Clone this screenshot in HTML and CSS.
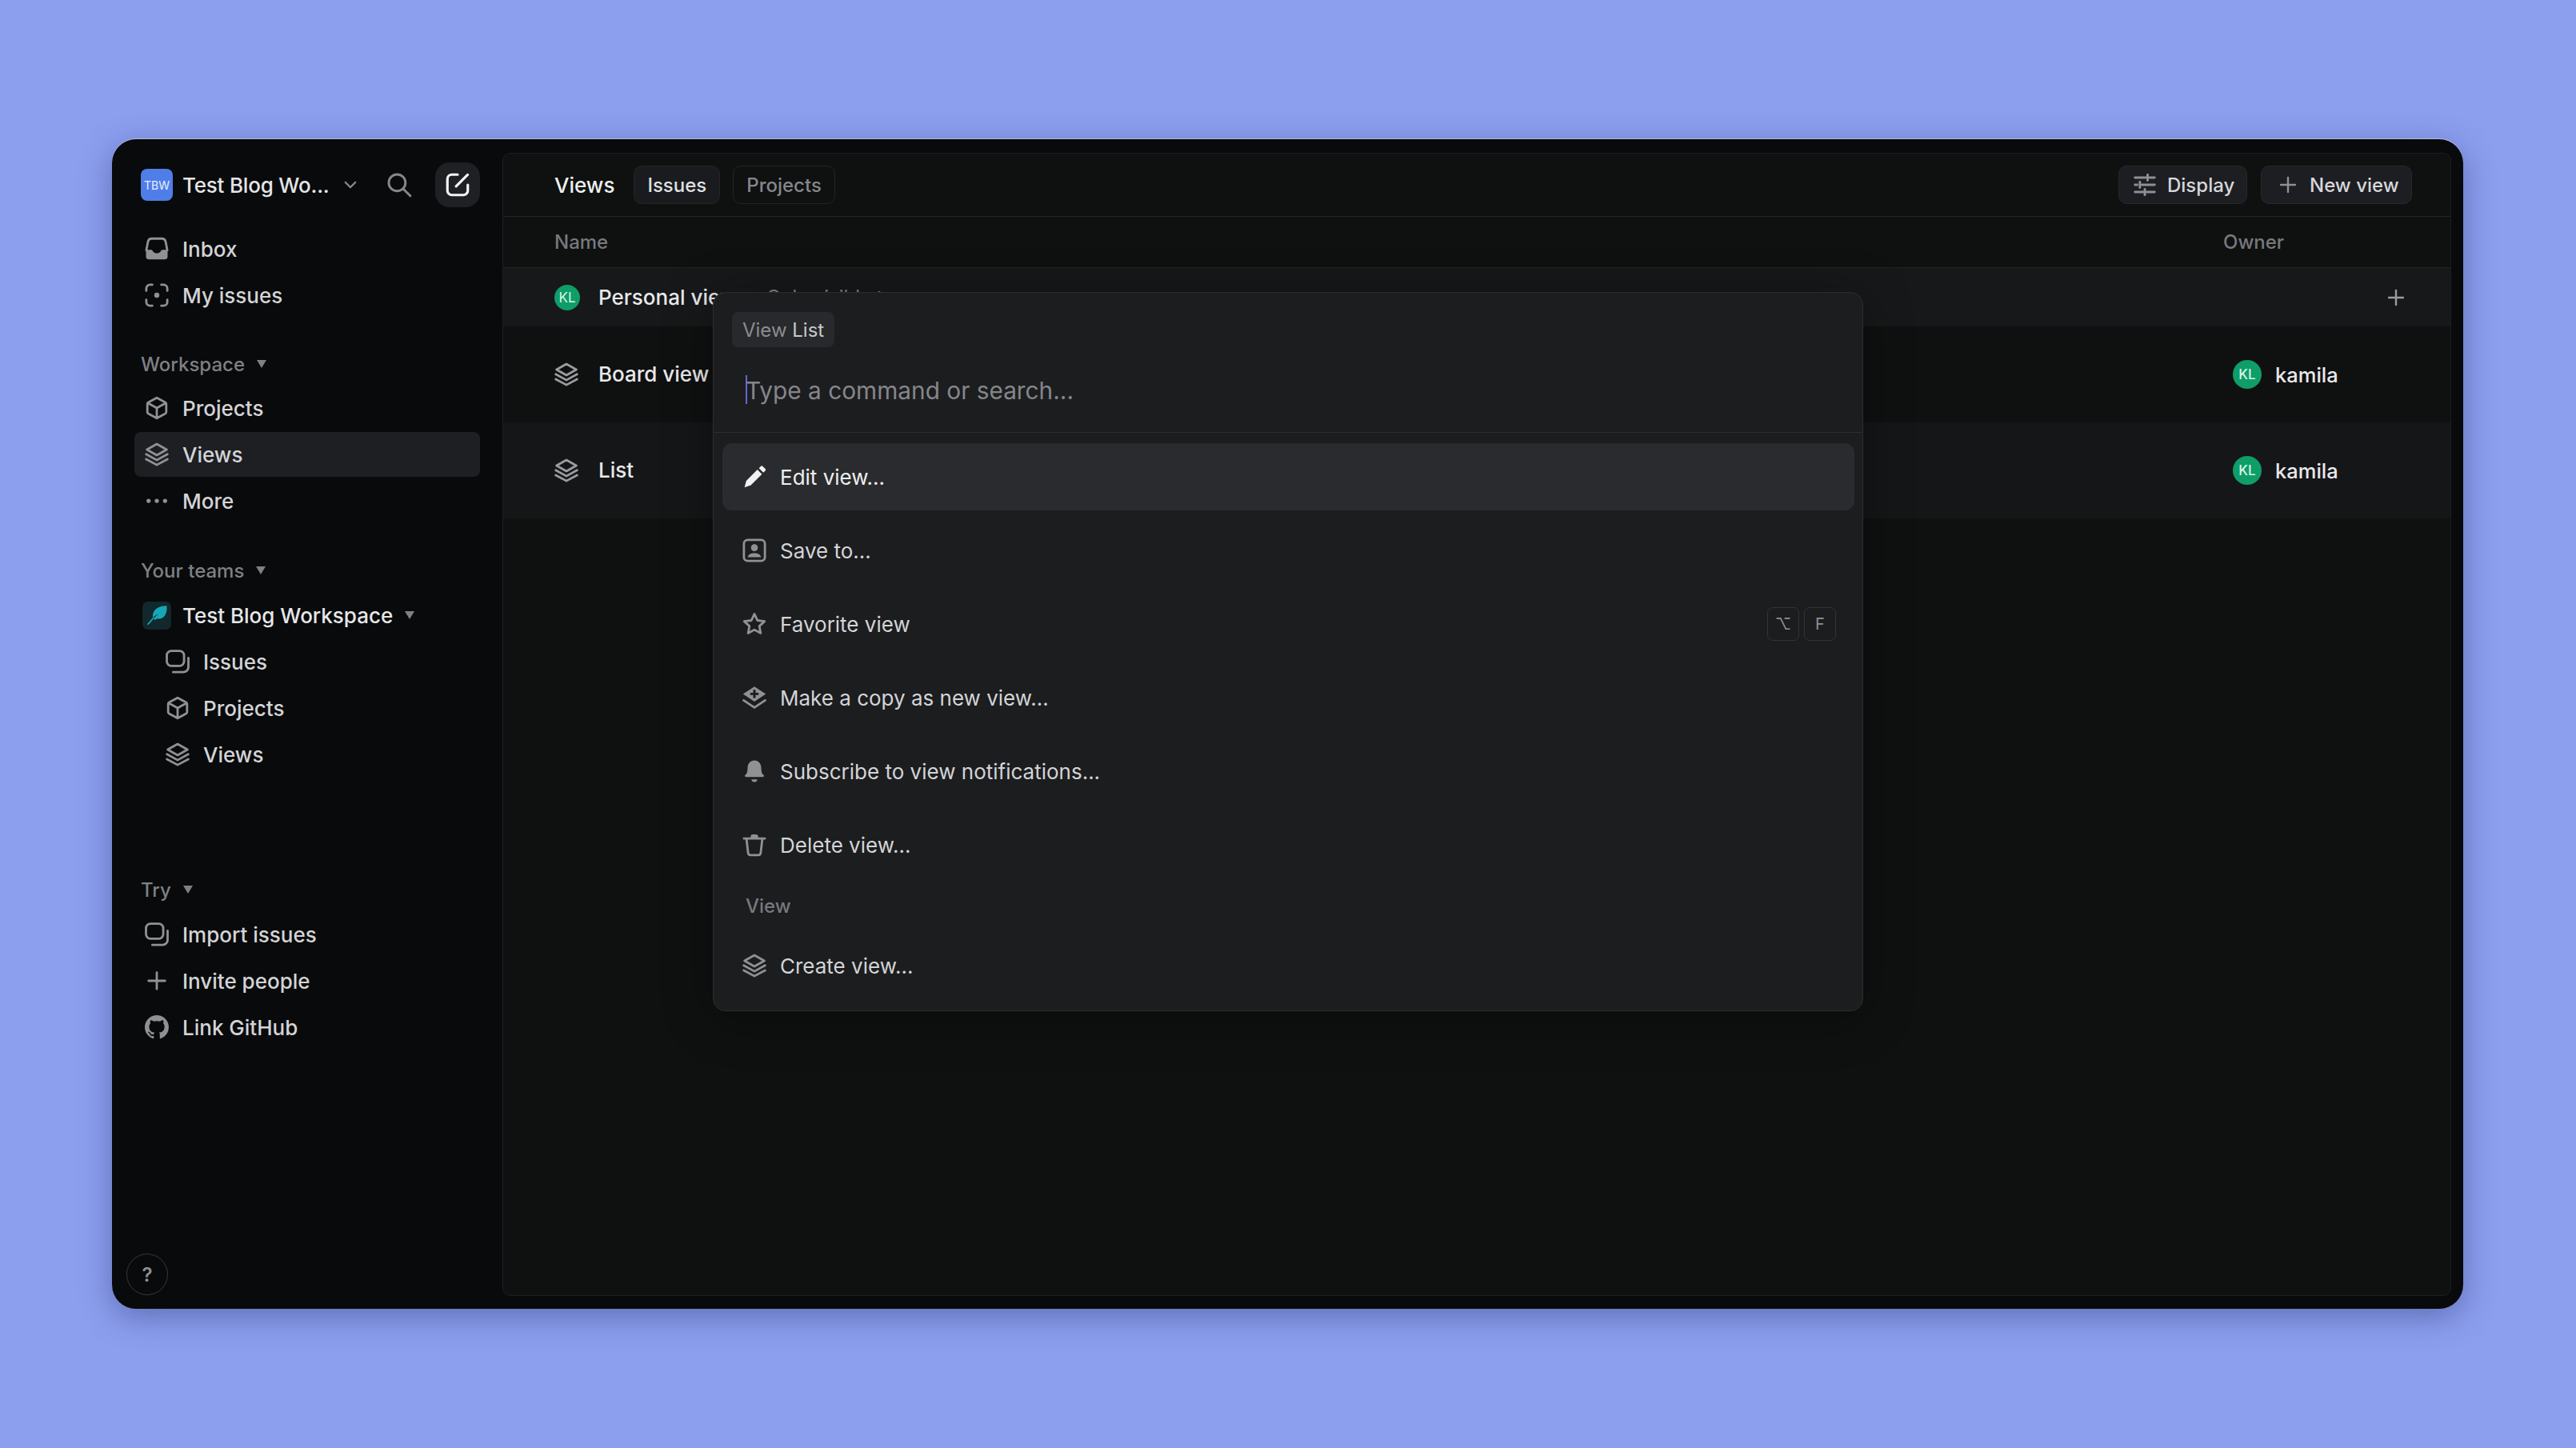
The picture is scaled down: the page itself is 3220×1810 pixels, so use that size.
FILE: index.html
```html
<!DOCTYPE html>
<html lang="en">
<head>
<meta charset="utf-8">
<title>Views</title>
<link rel="stylesheet" href="styles.css">
</head>
<body>
<svg class="defs" width="0" height="0" aria-hidden="true">
  <symbol id="i-inbox" viewBox="0 0 16 16"><path class="s" d="M1 9 2.100 3.300C2.400 2 3.300 1.200 4.600 1.200h6.800c1.300 0 2.200.8 2.500 2.100L15 9"/><path class="f" d="M.8 8.600H4c.6 0 1 .3 1.300.8.5 1 1.400 1.500 2.700 1.500s2.200-.5 2.700-1.500c.3-.5.7-.8 1.300-.8h3.200V13a2 2 0 0 1-2 2H2.800a2 2 0 0 1-2-2z"/></symbol>
  <symbol id="i-focus" viewBox="0 0 16 16"><path class="s" d="M1 5V3.500A2.500 2.500 0 0 1 3.500 1H5M11 1h1.500A2.500 2.500 0 0 1 15 3.500V5M15 11v1.500a2.500 2.500 0 0 1-2.500 2.500H11M5 15H3.500A2.500 2.500 0 0 1 1 12.500V11"/><circle class="f" cx="8" cy="8" r="1.700"/></symbol>
  <symbol id="i-cube" viewBox="0 0 16 16"><path class="s" d="M8 1.200 13.700 4.300c.4.200.6.600.6 1v5.400c0 .4-.2.800-.6 1L8 14.800 2.300 11.700c-.4-.2-.6-.6-.6-1V5.300c0-.4.2-.8.6-1zM2 4.700 8 8l6-3.300M8 8v6.500"/></symbol>
  <symbol id="i-layers" viewBox="0 0 16 16"><path class="s" d="M8 1.100 14.600 4.800 8 8.500 1.400 4.800zM.9 7.900 8 11.800l7.100-3.900M.9 11.200 8 15l7.100-3.800"/></symbol>
  <symbol id="i-more" viewBox="0 0 16 16"><circle class="f" cx="2.500" cy="8" r="1.400"/><circle class="f" cx="8" cy="8" r="1.400"/><circle class="f" cx="13.500" cy="8" r="1.400"/></symbol>
  <symbol id="i-issues" viewBox="0 0 16 16"><rect class="s" x=".8" y=".9" width="11.500" height="10" rx="3"/><path class="s" d="M15.200 5.500v6.200a3.300 3.300 0 0 1-3.300 3.300H5"/></symbol>
  <symbol id="i-plus" viewBox="0 0 16 16"><path class="s" d="M8 2.500v11M2.500 8h11"/></symbol>
  <symbol id="i-github" viewBox="0 0 16 16"><path class="f" d="M8 0C3.580 0 0 3.580 0 8c0 3.540 2.290 6.530 5.470 7.590.4.070.55-.17.55-.38 0-.19-.01-.82-.01-1.490-2.010.37-2.530-.49-2.690-.94-.09-.23-.48-.94-.82-1.130-.28-.15-.68-.52-.01-.53.63-.01 1.080.58 1.230.82.72 1.210 1.870.87 2.330.66.07-.52.28-.87.51-1.070-1.780-.2-3.640-.89-3.640-3.950 0-.87.31-1.590.82-2.150-.08-.2-.36-1.020.08-2.120 0 0 .67-.21 2.200.82.64-.18 1.320-.27 2-.27.68 0 1.360.09 2 .27 1.530-1.040 2.200-.82 2.200-.82.44 1.100.16 1.920.08 2.120.51.56.82 1.270.82 2.150 0 3.070-1.870 3.750-3.650 3.950.29.25.54.73.54 1.480 0 1.070-.01 1.930-.01 2.200 0 .21.15.46.55.38A8.013 8.013 0 0 0 16 8c0-4.420-3.580-8-8-8z"/></symbol>
  <symbol id="i-search" viewBox="0 0 16 16"><circle class="s" cx="6.700" cy="6.700" r="5.200"/><path class="s" d="m10.600 10.600 4.300 4.300"/></symbol>
  <symbol id="i-compose" viewBox="0 0 16 16"><path class="s2" d="M8 1.200H4.200a3 3 0 0 0-3 3v7.600a3 3 0 0 0 3 3h7.600a3 3 0 0 0 3-3V8"/><path class="s2" d="M14.700 1.300 7 9"/></symbol>
  <symbol id="i-sliders" viewBox="0 0 16 16"><path class="s2" d="M1 2.800h7.500M11.500 2.800H15M10 .8v4M1 8h1.500M6 8h9M4.500 6v4M1 13.200h5.500M9.500 13.200H15M8 11.200v4"/></symbol>
  <symbol id="i-pencil" viewBox="0 0 16 16"><path class="f" d="M10 3.200 13 6.200 5.600 13.600 1.400 15 2.600 10.600zM11 2.200l1.200-1.200c.4-.4 1-.4 1.400 0l1.600 1.600c.4.400.4 1 0 1.400L14 5.200z"/></symbol>
  <symbol id="i-person" viewBox="0 0 16 16"><rect class="s" x="1" y="1" width="14" height="14" rx="2.500"/><circle class="f" cx="8" cy="6.200" r="2.300"/><path class="f" d="M3.500 12.500c.4-1.700 1.900-2.700 4.500-2.700s4.100 1 4.500 2.700z"/></symbol>
  <symbol id="i-star" viewBox="0 0 16 16"><path class="s" d="M8 1.300 10 5.600l4.800.6-3.500 3.200.9 4.700L8 11.800l-4.200 2.300.9-4.700L1.200 6.200 6 5.600z"/></symbol>
  <symbol id="i-layerplus" viewBox="0 0 16 16"><path class="f" fill-rule="evenodd" d="M8 .6 15.600 5.600 8 10.600.4 5.600zM7.200 2.800v2h-2v1.500h2v2h1.600v-2h2V4.800h-2v-2z"/><path class="s" d="M.8 9.800 8 14.600l7.200-4.800"/></symbol>
  <symbol id="i-bell" viewBox="0 0 16 16"><path class="f" d="M8 .8c2.700 0 4.300 2 4.500 4.500l.2 2.500c.1 1.200.7 2 1.500 2.900.4.500.1 1.100-.5 1.100H2.300c-.6 0-.9-.6-.5-1.100.8-.9 1.400-1.700 1.500-2.900l.2-2.500C3.700 2.800 5.300.8 8 .8zM6 13.400h4C9.800 14.500 9 15.200 8 15.200s-1.800-.7-2-1.800z"/></symbol>
  <symbol id="i-trash" viewBox="0 0 16 16"><path class="s" d="M1 3.800h14M2.700 4l1.100 9.400c.1.900.8 1.500 1.700 1.500h5c.9 0 1.600-.6 1.700-1.500L13.300 4"/><path class="f" d="M5.500 3.500V2.500c0-.8.600-1.400 1.400-1.400h2.200c.8 0 1.400.6 1.400 1.400v1z"/></symbol>
  <symbol id="i-feather" viewBox="0 0 16 16"><path class="teal" d="M15 .8c.4 3-.2 6-2 8-1.300 1.500-3.300 1.900-5.200 1.400L6.200 11.600l-.5-1.900L9 6.600 4.700 9.200C4.500 6.600 5.500 4.200 7.700 2.700 9.700 1.300 12.200.9 15 .8zM6 9.600 1.400 15l-.9-.7 4.700-5.300z"/></symbol>
</svg>

<div class="window">
  <aside class="sidebar">
    <div class="head">
      <span class="logo">TBW</span>
      <span class="wsname">Test Blog Wo...</span>
      <svg class="chev" viewBox="0 0 16 16"><path d="M3 5.500 8 10.500 13 5.500"/></svg>
      <svg class="search"><use href="#i-search"/></svg>
      <span class="compose"><svg class="compose-ic"><use href="#i-compose"/></svg></span>
    </div>

    <nav class="nav nav-top">
      <a class="row"><svg class="ic"><use href="#i-inbox"/></svg>Inbox</a>
      <a class="row"><svg class="ic"><use href="#i-focus"/></svg>My issues</a>
    </nav>

    <div class="label label-a">Workspace<i class="tri"></i></div>
    <nav class="nav">
      <a class="row"><svg class="ic"><use href="#i-cube"/></svg>Projects</a>
      <a class="row active"><svg class="ic"><use href="#i-layers"/></svg>Views</a>
      <a class="row"><svg class="ic"><use href="#i-more"/></svg>More</a>
    </nav>

    <div class="label label-b">Your teams<i class="tri"></i></div>
    <nav class="nav nav-team">
      <a class="row team"><span class="teamlogo"><svg class="feather"><use href="#i-feather"/></svg></span>Test Blog Workspace<i class="tri tri-team"></i></a>
      <a class="row sub"><svg class="ic"><use href="#i-issues"/></svg>Issues</a>
      <a class="row sub"><svg class="ic"><use href="#i-cube"/></svg>Projects</a>
      <a class="row sub"><svg class="ic"><use href="#i-layers"/></svg>Views</a>
    </nav>

    <div class="label label-c">Try<i class="tri"></i></div>
    <nav class="nav">
      <a class="row"><svg class="ic"><use href="#i-issues"/></svg>Import issues</a>
      <a class="row"><svg class="ic"><use href="#i-plus"/></svg>Invite people</a>
      <a class="row"><svg class="ic"><use href="#i-github"/></svg>Link GitHub</a>
    </nav>

    <span class="help">?</span>
  </aside>

  <main class="main">
    <header class="topbar">
      <span class="title">Views</span>
      <span class="chip chip-on">Issues</span>
      <span class="chip">Projects</span>
      <span class="actions">
        <span class="btn btn-display"><svg class="btn-ic"><use href="#i-sliders"/></svg>Display</span>
        <span class="btn btn-new"><svg class="btn-ic"><use href="#i-plus"/></svg>New view</span>
      </span>
    </header>
    <div class="cols"><span>Name</span><span class="col-owner">Owner</span></div>
    <div class="vrow vrow-short vrow-hi">
      <span class="av av-sm">KL</span>
      <span class="vname">Personal views</span>
      <span class="vdesc">Only visible to you</span>
      <span class="owner owner-end"><svg class="addic"><use href="#i-plus"/></svg></span>
    </div>
    <div class="vrow">
      <svg class="vic"><use href="#i-layers"/></svg>
      <span class="vname">Board view</span>
      <span class="vdesc"></span>
      <span class="owner"><span class="av">KL</span>kamila</span>
    </div>
    <div class="vrow vrow-alt">
      <svg class="vic"><use href="#i-layers"/></svg>
      <span class="vname">List</span>
      <span class="vdesc"></span>
      <span class="owner"><span class="av">KL</span>kamila</span>
    </div>

    <section class="palette">
      <div class="crumb"><span class="crumb-tag"><span class="dim">View</span> List</span></div>
      <div class="query"><span class="caret"></span><span class="qtext">Type a command or search...</span></div>
      <div class="items">
        <div class="item current"><svg class="item-ic white"><use href="#i-pencil"/></svg>Edit view...</div>
        <div class="item"><svg class="item-ic"><use href="#i-person"/></svg>Save to...</div>
        <div class="item"><svg class="item-ic"><use href="#i-star"/></svg>Favorite view<span class="keys"><kbd>⌥</kbd><kbd>F</kbd></span></div>
        <div class="item"><svg class="item-ic"><use href="#i-layerplus"/></svg>Make a copy as new view...</div>
        <div class="item"><svg class="item-ic"><use href="#i-bell"/></svg>Subscribe to view notifications...</div>
        <div class="item"><svg class="item-ic"><use href="#i-trash"/></svg>Delete view...</div>
        <div class="group">View</div>
        <div class="item"><svg class="item-ic"><use href="#i-layers"/></svg>Create view...</div>
      </div>
    </section>
  </main>
</div>
</body>
</html>
```

FILE: styles.css
```css
* { box-sizing: border-box; }
html, body { margin: 0; height: 100%; }
body {
  width: 3220px;
  height: 1810px;
  overflow: hidden;
  background: #8c9fef;
  padding: 174px 0 0 140px;
  font-family: Inter, "Liberation Sans", sans-serif;
  color: #d8d9dc;
}
.defs { position: absolute; }
.s { fill: none; stroke: currentColor; stroke-width: 1.5; stroke-linecap: round; stroke-linejoin: round; }
.s2 { fill: none; stroke: currentColor; stroke-width: 1.7; stroke-linecap: round; stroke-linejoin: round; }
.f { fill: currentColor; }
.teal { fill: #17a6b5; }

.window {
  width: 2939px;
  height: 1462px;
  background: #090a0b;
  border-radius: 30px;
  display: flex;
  box-shadow: 0 -1px 0 rgba(255, 255, 255, .4), 0 10px 40px rgba(40, 50, 110, .45);
}

/* sidebar */
.sidebar {
  width: 488px;
  flex: none;
  padding: 29px 28px 17px;
  display: flex;
  flex-direction: column;
}
.head { height: 56px; display: flex; align-items: center; padding-left: 8px; }
.logo {
  width: 40px; height: 40px; flex: none;
  background: #4f7ee8;
  border-radius: 8px;
  color: #e8eeff;
  font-size: 14px;
  display: flex; align-items: center; justify-content: center;
}
.wsname { margin-left: 12px; font-size: 26px; letter-spacing: -.2px; font-weight: 500; color: #e4e5e7; white-space: nowrap; }
.chev { width: 20px; height: 20px; margin-left: 16px; fill: none; stroke: #85868b; stroke-width: 1.7; stroke-linecap: round; stroke-linejoin: round; }
.search { width: 32px; height: 32px; color: #85868b; margin-left: 35px; }
.compose {
  width: 56px; height: 56px; margin-left: auto;
  background: #1f2023; border-radius: 18px;
  display: flex; align-items: center; justify-content: center;
  color: #f4f4f5;
}
.compose-ic { width: 30px; height: 30px; }

.nav { display: flex; flex-direction: column; gap: 2px; }
.nav-top { margin-top: 24px; }
.row {
  height: 56px;
  display: flex; align-items: center;
  padding-left: 14px;
  border-radius: 8px;
  font-size: 26px; font-weight: 500;
  color: #d3d4d7;
  white-space: nowrap;
}
.row.active { background: #1e1f23; }
.row.sub { padding-left: 40px; }
.ic { width: 30px; height: 30px; color: #909195; margin: 0 17px 0 -1px; flex: none; }
.team { color: #e6e7e9; }
.teamlogo {
  width: 36px; height: 35px; margin: 0 14px 0 -4px; flex: none;
  background: #11282c; border-radius: 7px;
  display: flex; align-items: center; justify-content: center;
}
.feather { width: 27px; height: 27px; }

.label {
  height: 42px;
  display: flex; align-items: center;
  padding-left: 8px;
  font-size: 24px; font-weight: 500;
  color: #7f8085;
  margin-bottom: 6px;
  white-space: nowrap;
}
.label-a { margin-top: 37px; }
.label-b { margin-top: 38px; margin-bottom: 7px; }
.label-c { margin-top: 120px; margin-bottom: 7px; }
.tri {
  width: 0; height: 0; margin-left: 15px; display: block;
  border-left: 6px solid transparent;
  border-right: 6px solid transparent;
  border-top: 10px solid #7f8085;
}
.tri-team { margin-left: 15px; }

.help {
  margin-top: auto; margin-left: -10px;
  width: 52px; height: 52px;
  border: 1.5px solid #37383b;
  border-radius: 50%;
  display: flex; align-items: center; justify-content: center;
  font-size: 24px; font-weight: 600;
  color: #8f9094;
}

/* main */
.main {
  position: relative;
  width: 2436px;
  margin: 17px 0 16px;
  background: #0f1010;
  border: 1px solid #1d1e21;
  border-radius: 10px;
  overflow: hidden;
}
.topbar {
  height: 79px;
  display: flex; align-items: center;
  padding: 0 48px 0 64px;
  border-bottom: 1px solid #232427;
}
.title { font-size: 26px; font-weight: 500; color: #eeeff0; margin-right: 24px; }
.chip {
  height: 48px; padding: 0 16px;
  display: flex; align-items: center;
  border: 1px solid #232427; border-radius: 10px;
  font-size: 24px; font-weight: 500;
  color: #85868b;
  margin-right: 16px;
}
.chip-on { background: #1a1b1e; color: #dfe0e2; }
.actions { margin-left: auto; display: flex; gap: 17px; }
.btn {
  height: 48px;
  display: flex; align-items: center;
  background: #1d1e22;
  border: 1px solid #27282c; border-radius: 10px;
  font-size: 24px; font-weight: 500;
  color: #d6d7da;
}
.btn-display { width: 161px; padding-left: 18px; }
.btn-new { width: 189px; padding-left: 20px; }
.btn-ic { width: 28px; height: 28px; color: #8f9094; margin-right: 14px; flex: none; }
.btn-new .btn-ic { width: 26px; height: 26px; margin-right: 14px; }

.cols {
  height: 64px;
  display: flex; align-items: center;
  padding-left: 64px;
  font-size: 24px; font-weight: 500;
  color: #77787d;
  border-bottom: 1px solid #1f2023;
}
.col-owner { margin-left: auto; width: 284px; }

.vrow {
  height: 120px;
  display: grid;
  grid-template-columns: 32px 233px 1fr 272px;
  align-items: center;
  padding-left: 64px;
}
.vrow-short { height: 73px; }
.vrow-hi { background: #17181a; }
.vrow-alt { background: #151618; }
.vic { width: 30px; height: 30px; color: #9b9ca0; }
.vname { margin-left: 23px; padding-bottom: 1px; font-size: 26px; font-weight: 500; color: #e8e9eb; white-space: nowrap; }
.vdesc { font-size: 24px; color: #85868b; }
.owner { display: flex; align-items: center; font-size: 25.5px; font-weight: 500; color: #e8e9eb; }
.owner-end { justify-content: flex-end; padding-right: 55px; }
.addic { width: 26px; height: 26px; color: #9b9ca0; }
.av {
  width: 36px; height: 36px; margin-right: 17px; flex: none;
  border-radius: 50%;
  background: #0f9d68;
  color: #d9f5e8;
  font-size: 17px;
  display: flex; align-items: center; justify-content: center;
}
.av-sm { width: 32px; height: 32px; margin-right: 0; }

/* command palette */
.palette {
  position: absolute;
  top: 173px; left: 262px;
  width: 1438px;
  height: 899px;
  background: #1c1d1f;
  border: 1px solid #2c2d31;
  border-radius: 16px;
  box-shadow: 0 8px 60px rgba(0, 0, 0, .35);
}
.crumb { padding: 24px 0 0 23px; display: flex; }
.crumb-tag {
  height: 44px; padding: 0 13px;
  display: flex; align-items: center; gap: .28em;
  background: #28292c; border-radius: 8px;
  font-size: 24px; font-weight: 400;
  color: #c7c8cb;
}
.dim { color: #8b8c90; }
.query {
  height: 107px;
  display: flex; align-items: center;
  padding-left: 40px;
  font-size: 29.8px;
  color: #85868b;
  border-bottom: 1px solid #2c2d31;
}
.qtext { padding-top: 2px; margin-left: -2px; }
.caret { width: 2px; height: 36px; background: #5e6ad2; flex: none; }
.items { padding: 13px 10px 0 11px; display: flex; flex-direction: column; gap: 8px; }
.item {
  height: 84px;
  display: flex; align-items: center;
  padding-left: 26px;
  border-radius: 12px;
  font-size: 26px;
  color: #d3d4d7;
  white-space: nowrap;
}
.current { background: #2a2b2e; color: #eeeff0; }
.item-ic { width: 30px; height: 30px; color: #909195; margin: 0 17px 0 -1px; flex: none; }
.white { color: #f2f2f3; }
.keys { margin-left: auto; margin-right: 23px; display: flex; gap: 6px; }
kbd {
  width: 40px; height: 42px;
  display: flex; align-items: center; justify-content: center;
  border: 1px solid #333438; border-radius: 7px;
  font-family: Inter, "DejaVu Sans", sans-serif;
  font-size: 20px;
  color: #8f9094;
}
.group { height: 53px; margin-bottom: -2px; display: flex; align-items: center; padding-left: 29px; font-size: 24px; color: #77787d; font-weight: 500; }
```
